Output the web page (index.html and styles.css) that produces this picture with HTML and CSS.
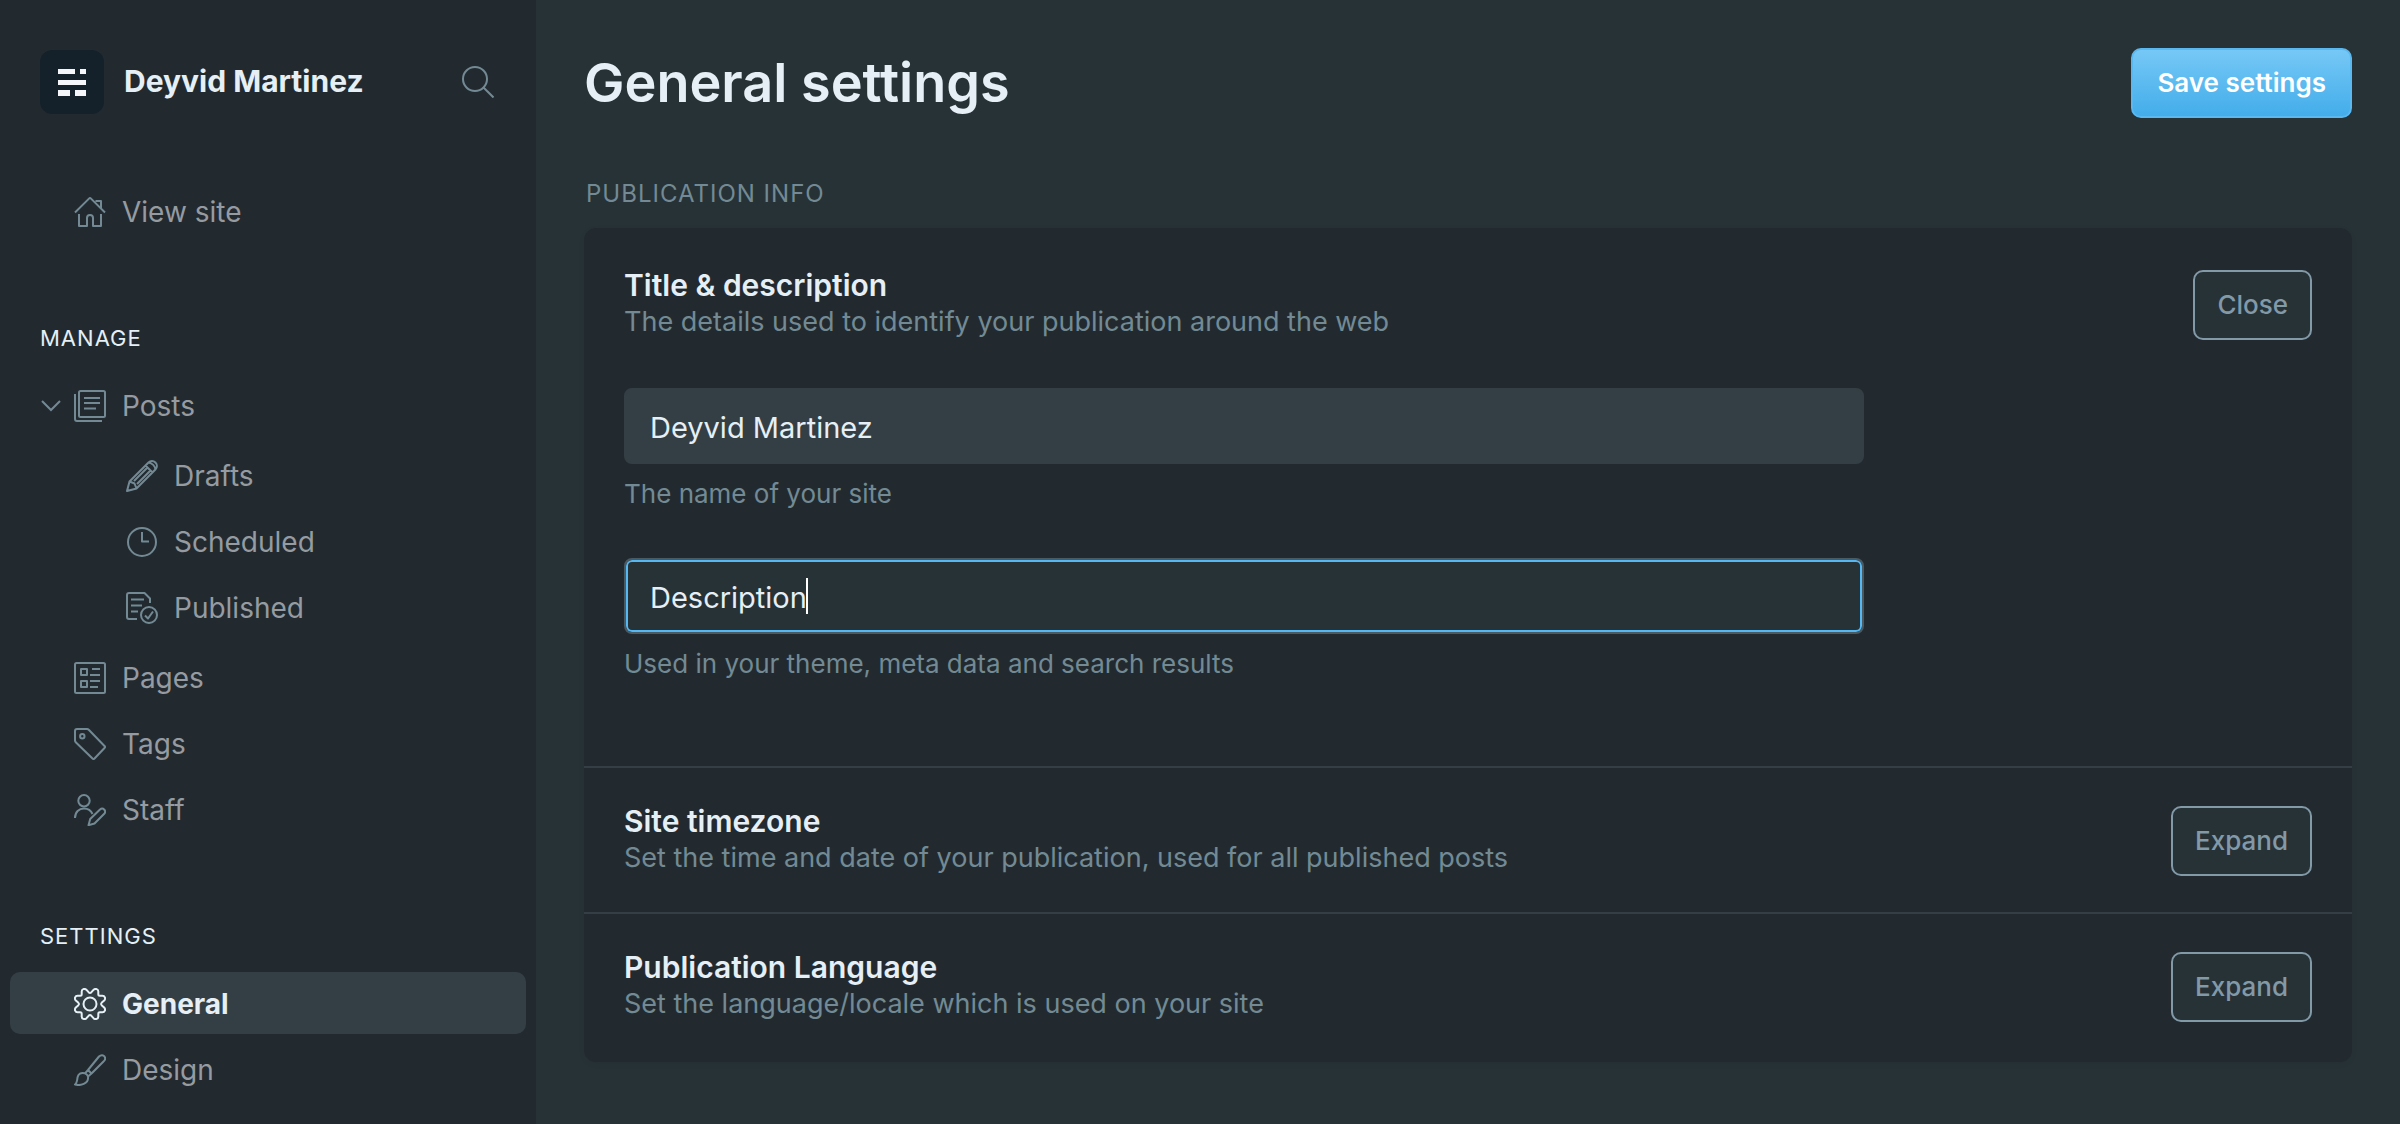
FILE: index.html
```html
<!DOCTYPE html>
<html lang="en">
<head>
<meta charset="utf-8">
<title>General settings</title>
<link rel="stylesheet" href="styles.css">
</head>
<body>
<div class="app">
  <aside class="sidebar">
    <div class="brand">
      <svg class="brand-logo" viewBox="0 0 64 64" aria-hidden="true">
        <path d="M18 19h17v5H18zM40 19h6v5h-6zM18 30h28v5H18zM18 40h12v6H18zM35 40h11v6H35z"/>
      </svg>
      <span class="brand-name">Deyvid Martinez</span>
      <button class="search" type="button" aria-label="Search">
        <svg class="icon" viewBox="0 0 32 32"><circle cx="13" cy="13" r="12"/><path d="M21.500 21.500l10 10"/></svg>
      </button>
    </div>

    <nav class="nav">
      <ul class="nav-list">
        <li><a class="nav-item" href="#view"><svg class="icon" viewBox="0 0 32 32"><path d="M1 16.500L15 2.600q1-1 2 0L31 16.500M5 18v12h8v-8q0-3 3-3t3 3v8h8V18M21.500 5H27v7"/></svg>View site</a></li>
      </ul>

      <h2 class="nav-title">Manage</h2>
      <ul class="nav-list">
        <li>
          <a class="nav-item has-toggle" href="#posts"><svg class="chevron" viewBox="0 0 20 12"><path d="M1 1l9 9 9-9"/></svg><svg class="icon" viewBox="0 0 32 32"><rect x="5" y="1" width="26" height="26" rx="1.500"/><path d="M1 4v25q0 2 2 2h25M10 8h16M10 13h16M10 18.500h12"/></svg>Posts</a>
          <ul class="nav-list nav-sub">
            <li><a class="nav-item" href="#drafts"><svg class="icon" viewBox="0 0 32 32"><path d="M1 31l2.500-9.500L22.500 2.500c2-2 4.900-2 6.900 0s2 4.900 0 7L10.500 28.500zM3.500 21.500l5 2 2 5M8 21L21 8M11 24L24 11M19.500 5.500l7 7M22.500 2.500c3.500.5 6.500 3.500 7 7"/></svg>Drafts</a></li>
            <li><a class="nav-item" href="#scheduled"><svg class="icon" viewBox="0 0 32 32"><circle cx="16" cy="16" r="14"/><path d="M16 6v9.500h7"/></svg>Scheduled</a></li>
            <li><a class="nav-item" href="#published"><svg class="icon" viewBox="0 0 32 32"><path d="M11 27H3q-2 0-2-2V3q0-2 2-2h15.500L24 6.500V11M5 7.500h13M5 13.500h11M5 19.500h7M19 23.500l3 3 5-7"/><circle cx="23" cy="23" r="8"/></svg>Published</a></li>
          </ul>
        </li>
        <li><a class="nav-item" href="#pages"><svg class="icon" viewBox="0 0 32 32"><rect x="1" y="1" width="30" height="30" rx="1.500"/><path d="M7 7h6v6H7zM7 19h6v6H7zM18 7h8M16 13h10M16 19h10M16 25h8"/></svg>Pages</a></li>
        <li><a class="nav-item" href="#tags"><svg class="icon" viewBox="0 0 32 32"><path d="M1 3q0-2 2-2h10q1 0 2 1l15.500 16q1 1 0 2L20.500 30.500q-1 1-2 0L2 14.500q-1-1-1-2z"/><circle cx="8.300" cy="8.300" r="2.200"/></svg>Tags</a></li>
        <li><a class="nav-item" href="#staff"><svg class="icon" viewBox="0 0 32 32"><circle cx="10" cy="6.700" r="5.700"/><path d="M1 24c0-6 4-9.500 9-9.500 4 0 7 2 8.500 5.500M14.500 31.200l1.700-6.200 9.800-9.500c3-2.500 6.500 1 4.500 4L20.500 29.500z"/></svg>Staff</a></li>
      </ul>

      <h2 class="nav-title">Settings</h2>
      <ul class="nav-list">
        <li><a class="nav-item is-active" href="#general" aria-current="page"><svg class="icon" viewBox="0 0 32 32"><path d="M14.600 4.200q1.400 1.400 2.800 0L19.500 1.800C21.500 0 24.300 1.200 24.300 3.600V6.200q0 1.500 1.500 1.500H28.400C30.800 7.700 32 10.500 30.200 12.500L27.800 14.600q-1.400 1.400 0 2.800L30.200 19.500C32 21.500 30.800 24.300 28.400 24.300H25.800q-1.500 0-1.500 1.500V28.400C24.300 30.800 21.500 32 19.500 30.200L17.400 27.800q-1.400-1.400-2.800 0L12.500 30.200C10.500 32 7.700 30.800 7.700 28.400V25.800q0-1.500-1.500-1.500H3.600C1.200 24.300 0 21.500 1.800 19.500L4.200 17.400q1.400-1.400 0-2.800L1.800 12.500C0 10.500 1.200 7.700 3.600 7.700H6.200q1.500 0 1.500-1.500V3.600C7.700 1.200 10.500 0 12.500 1.800z"/><circle cx="16" cy="16" r="6.500"/></svg>General</a></li>
        <li><a class="nav-item" href="#design"><svg class="icon" viewBox="0 0 32 32"><path d="M14 16L25 2.500c2-2 4.500-1.500 5.500 0s.8 3.500-1 5L17.500 19.500M14 16l-3 3.300M17.500 19.500L14 22.500M14 16l3.500 3.500M11 19.300c-4-1.300-7 .7-7.500 4.200C3.200 27 3 29 1 30.500 6 32 15 30 14 22.500c-.5-1.500-1.500-2.500-3-3.200z"/></svg>Design</a></li>
      </ul>
    </nav>
  </aside>

  <main class="main">
    <header class="page-head">
      <h1 class="page-title">General settings</h1>
      <button class="btn btn-primary" type="submit" form="settings">Save settings</button>
    </header>

    <h2 class="group-title">Publication info</h2>
    <form class="card" id="settings">
      <section class="setting setting-open">
        <div class="setting-head">
          <div>
            <h3 class="setting-title">Title &amp; description</h3>
            <p class="setting-desc">The details used to identify your publication around the web</p>
          </div>
          <button class="btn" type="button">Close</button>
        </div>
        <div class="fields">
          <div class="field">
            <input class="input" type="text" value="Deyvid Martinez" aria-labelledby="name-help">
            <p class="help" id="name-help">The name of your site</p>
          </div>
          <div class="field">
            <div class="input-wrap">
              <input class="input is-focused" type="text" value="Description" aria-labelledby="desc-help">
              <span class="caret"></span>
            </div>
            <p class="help" id="desc-help">Used in your theme, meta data and search results</p>
          </div>
        </div>
      </section>
      <section class="setting">
        <div class="setting-head">
          <div>
            <h3 class="setting-title">Site timezone</h3>
            <p class="setting-desc">Set the time and date of your publication, used for all published posts</p>
          </div>
          <button class="btn" type="button">Expand</button>
        </div>
      </section>
      <section class="setting">
        <div class="setting-head">
          <div>
            <h3 class="setting-title">Publication Language</h3>
            <p class="setting-desc">Set the language/locale which is used on your site</p>
          </div>
          <button class="btn" type="button">Expand</button>
        </div>
      </section>
    </form>
  </main>
</div>
</body>
</html>
```

FILE: styles.css
```css
:root {
  --bg: #273237;
  --panel: #222a30;
  --raised: #343f45;
  --light: #e5eff5;
  --muted: #738a94;
  --nav-text: #959ba1;
  --blue: #54b8f5;
}

* {
  box-sizing: border-box;
}

body,
h1,
h2,
h3,
p,
ul {
  margin: 0;
  padding: 0;
}

body {
  background: var(--bg);
  color: var(--light);
  font-family: Inter, "Liberation Sans", sans-serif;
  font-size: 26px;
}

ul {
  list-style: none;
}

.app {
  display: flex;
  min-height: 100vh;
}

/* Sidebar */

.sidebar {
  flex: 0 0 536px;
  background: var(--panel);
  padding: 50px 10px 10px;
}

.brand {
  display: flex;
  align-items: center;
  padding: 0 32px 0 30px;
}

.brand-logo {
  width: 64px;
  height: 64px;
  margin-right: 20px;
  border-radius: 12px;
  background: #15212a;
  fill: #f5f6fa;
}

.brand-name {
  flex: 1;
  padding-bottom: 2px;
  font-size: 30px;
  font-weight: 700;
}

.search {
  display: flex;
  padding: 0;
  border: 0;
  background: none;
}

.icon {
  flex: none;
  width: 32px;
  height: 32px;
  fill: none;
  stroke: var(--muted);
  stroke-width: 2;
  stroke-linejoin: round;
}

.nav {
  padding-top: 66px;
}

.nav-list {
  display: flex;
  flex-direction: column;
  gap: 4px;
}

.nav-sub {
  padding: 8px 0 4px;
}

.nav-title {
  margin: 80px 0 20px;
  padding-left: 30px;
  font-size: 22px;
  font-weight: 400;
  line-height: 32px;
  letter-spacing: 1px;
  text-transform: uppercase;
}

.nav-item {
  display: flex;
  align-items: center;
  gap: 16px;
  height: 62px;
  padding: 2px 20px 0 64px;
  border-radius: 10px;
  color: var(--nav-text);
  font-size: 28px;
  text-decoration: none;
}

.nav-item.has-toggle {
  padding-left: 31px;
}

.chevron {
  width: 20px;
  height: 12px;
  margin-right: -3px;
  fill: none;
  stroke: var(--muted);
  stroke-width: 2;
}

.nav-sub .nav-item {
  padding-left: 116px;
}

.nav-item.is-active {
  background: var(--raised);
  color: var(--light);
  font-weight: 700;
}

.is-active .icon {
  stroke: var(--light);
}

/* Main column */

.main {
  flex: 1;
  min-width: 0;
  padding: 48px;
}

.page-head {
  display: flex;
  align-items: center;
  justify-content: space-between;
  margin-bottom: 60px;
}

.page-title {
  font-size: 54px;
  font-weight: 600;
  line-height: 70px;
}

.group-title {
  margin-bottom: 18px;
  padding-left: 2px;
  color: var(--muted);
  font-size: 24px;
  font-weight: 400;
  line-height: 32px;
  letter-spacing: 1px;
  text-transform: uppercase;
}

.btn {
  height: 70px;
  padding: 0 22px 2px;
  border: 2px solid #8299a8;
  border-radius: 10px;
  background: var(--bg);
  color: #8299a8;
  font-family: inherit;
  font-size: 26px;
  font-weight: 500;
  white-space: nowrap;
}

.btn-primary {
  padding: 0 24px 2px;
  border-color: #5ab8f0;
  background: linear-gradient(#76c8f6, #43adea);
  color: #fff;
  font-weight: 600;
}

.card {
  border-radius: 12px;
  background: var(--panel);
  box-shadow: 0 2px 6px rgba(0, 0, 0, 0.05);
}

.setting {
  padding: 38px 40px 32px;
}

.setting + .setting {
  border-top: 2px solid var(--raised);
}

.setting:last-child {
  padding-bottom: 36px;
}

.setting-open {
  padding: 42px 40px 86px;
}

.setting-head {
  display: flex;
  align-items: flex-start;
  justify-content: space-between;
}

.setting-title {
  font-size: 30px;
  font-weight: 600;
  line-height: 30px;
}

.setting-desc {
  color: var(--muted);
  font-size: 27px;
  line-height: 44px;
}

.fields {
  display: flex;
  flex-direction: column;
  gap: 48px;
  max-width: 1240px;
  margin-top: 44px;
}

.input-wrap {
  position: relative;
}

.input {
  display: block;
  width: 100%;
  height: 76px;
  padding: 2px 24px 0;
  border: 2px solid var(--raised);
  border-radius: 8px;
  outline: none;
  background: var(--raised);
  color: var(--light);
  font-family: inherit;
  font-size: 29px;
}

.input.is-focused {
  border-color: #4a5a62;
  background: var(--bg);
  box-shadow: inset 0 0 0 2px var(--blue);
}

/* Text cursor drawn over the focused field */
.caret {
  position: absolute;
  top: 20px;
  left: 182px;
  width: 2px;
  height: 36px;
  background: #fff;
}

.help {
  margin-top: 14px;
  color: var(--muted);
  font-size: 26px;
  line-height: 32px;
}
```
